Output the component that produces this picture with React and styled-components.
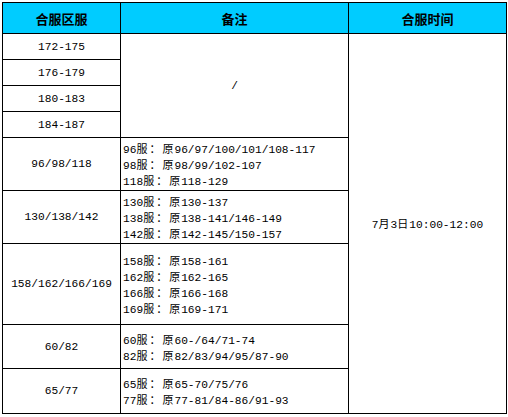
import React from 'react';
import styled, { createGlobalStyle } from 'styled-components';

const GlobalStyle = createGlobalStyle`
  html, body {
    margin: 0;
    padding: 0;
    background: #fff;
  }
`;

const Page = styled.div`
  padding: 2px;
  font-family: "Liberation Mono", "Noto Sans CJK SC", monospace;
  font-size: 11.2px;
  color: #000;
`;

const Table = styled.table`
  width: 504px;
  border-collapse: collapse;
  table-layout: fixed;
`;

const HeadCell = styled.th`
  height: 30px;
  padding: 0;
  background: #00ccff;
  border: 1px solid #000;
  font-family: "Noto Sans CJK SC", sans-serif;
  font-size: 13px;
  font-weight: bold;
  text-align: center;
  vertical-align: middle;
`;

const Row = styled.tr`
  height: ${(p) => p.$h}px;
`;

const CenterCell = styled.td`
  padding: 0;
  border: 1px solid #000;
  text-align: center;
  vertical-align: middle;
  line-height: 16px;
  white-space: nowrap;
`;

const ListCell = styled.td`
  padding: 0 0 0 2px;
  border: 1px solid #000;
  text-align: left;
  vertical-align: middle;
  line-height: 16px;
  white-space: nowrap;
`;

const Line = styled.div`
  height: 16px;
`;

const Cjk = styled.span`
  font-family: "Noto Sans CJK SC", sans-serif;
  font-size: 11px;
  letter-spacing: 2px;
  margin-right: -1px;
`;

// wrap CJK runs so they get the wider full-width spacing
const Txt = ({ children }) =>
  children.split(/([\u4e00-\u9fff\uff1a]+)/).map((part, i) =>
    /[\u4e00-\u9fff\uff1a]/.test(part) ? <Cjk key={i}>{part}</Cjk> : part
  );

const singles = ['172-175', '176-179', '180-183', '184-187'];

const groups = [
  {
    name: '96/98/118',
    h: 53,
    lines: ['96服：原96/97/100/101/108-117', '98服：原98/99/102-107', '118服：原118-129'],
  },
  {
    name: '130/138/142',
    h: 53,
    lines: ['130服：原130-137', '138服：原138-141/146-149', '142服：原142-145/150-157'],
  },
  {
    name: '158/162/166/169',
    h: 81,
    lines: ['158服：原158-161', '162服：原162-165', '166服：原166-168', '169服：原169-171'],
  },
  {
    name: '60/82',
    h: 44,
    lines: ['60服：原60-/64/71-74', '82服：原82/83/94/95/87-90'],
  },
  {
    name: '65/77',
    h: 45,
    lines: ['65服：原65-70/75/76', '77服：原77-81/84-86/91-93'],
  },
];

const App = () => {
  return (
    <Page>
      <GlobalStyle />
      <Table>
        <colgroup>
          <col style={{ width: 118 }} />
          <col style={{ width: 228 }} />
          <col style={{ width: 158 }} />
        </colgroup>
        <thead>
          <tr>
            <HeadCell>合服区服</HeadCell>
            <HeadCell>备注</HeadCell>
            <HeadCell>合服时间</HeadCell>
          </tr>
        </thead>
        <tbody>
          {singles.map((s, i) => (
            <Row key={s} $h={26}>
              <CenterCell>{s}</CenterCell>
              {i === 0 && <CenterCell rowSpan={4}>/</CenterCell>}
              {i === 0 && (
                <CenterCell rowSpan={4 + groups.length}>
                  <Txt>7月3日10:00-12:00</Txt>
                </CenterCell>
              )}
            </Row>
          ))}
          {groups.map((g) => (
            <Row key={g.name} $h={g.h}>
              <CenterCell>{g.name}</CenterCell>
              <ListCell>
                {g.lines.map((l) => (
                  <Line key={l}>
                    <Txt>{l}</Txt>
                  </Line>
                ))}
              </ListCell>
            </Row>
          ))}
        </tbody>
      </Table>
    </Page>
  );
};

export default App;
